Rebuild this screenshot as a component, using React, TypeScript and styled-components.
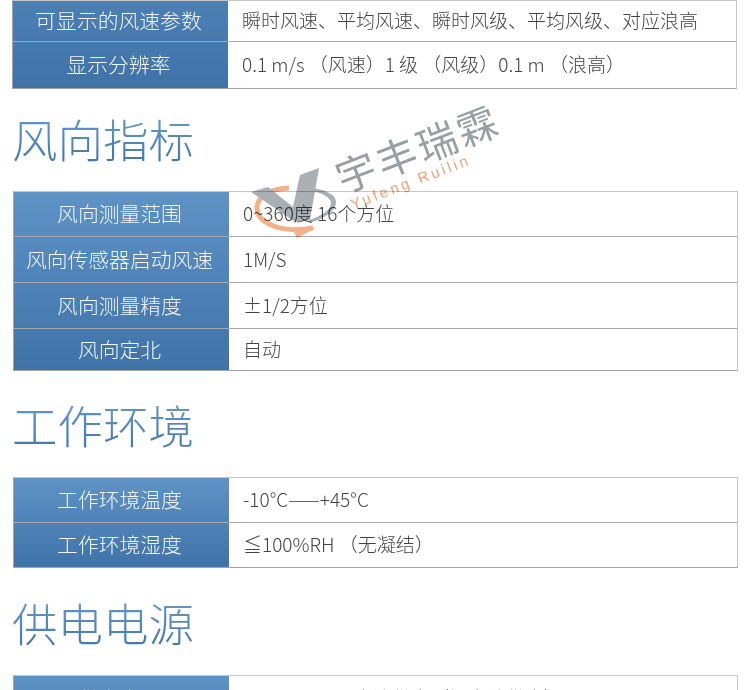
import React from 'react'
import styled, { createGlobalStyle } from 'styled-components'

type Row = { label: string; value: string; height: number }

const speedRows: Row[] = [
  { label: '可显示的风速参数', value: '瞬时风速、平均风速、瞬时风级、平均风级、对应浪高', height: 40 },
  { label: '显示分辨率', value: '0.1 m/s （风速）1 级 （风级）0.1 m （浪高）', height: 47 },
]

const directionRows: Row[] = [
  { label: '风向测量范围', value: '0~360度 16个方位', height: 44 },
  { label: '风向传感器启动风速', value: '1M/S', height: 46 },
  { label: '风向测量精度', value: '±1/2方位', height: 46 },
  { label: '风向定北', value: '自动', height: 42 },
]

const environmentRows: Row[] = [
  { label: '工作环境温度', value: '-10°C——+45°C', height: 44 },
  { label: '工作环境湿度', value: '≦100%RH （无凝结）', height: 45 },
]

const powerRows: Row[] = [{ label: '供电电压', value: 'DC 12V—24V 直流供电（锂电池供电）', height: 46 }]

const App = () => {
  return (
    <St.Page>
      <GlobalStyle />
      <SpecTable rows={speedRows} $from="#4c80b5" $span={89} $nudge />
      <St.Heading $top={21} $bottom={24}>风向指标</St.Heading>
      <St.TableWrap>
        <SpecTable rows={directionRows} $span={180} />
        <Watermark />
      </St.TableWrap>
      <St.Heading $top={25} $bottom={24}>工作环境</St.Heading>
      <SpecTable rows={environmentRows} $span={91} />
      <St.Heading $top={26} $bottom={24}>供电电源</St.Heading>
      <SpecTable rows={powerRows} $span={91} />
    </St.Page>
  )
}

export default App

const SpecTable = ({
  rows,
  $from = '#5f93c6',
  $span,
  $nudge,
}: {
  rows: Row[]
  $from?: string
  $span: number
  $nudge?: boolean
}) => (
  <St.Table $from={$from} $span={$span} $nudge={$nudge}>
    {rows.map((row) => (
      <St.Row key={row.label} $height={row.height}>
        <St.Label>{row.label}</St.Label>
        <St.Value>{row.value}</St.Value>
      </St.Row>
    ))}
  </St.Table>
)

const Watermark = () => (
  <St.Mark>
    <St.MarkLogo width="110" height="85" viewBox="0 0 110 85">
      <path d="M44 28C24 29 12 37 12 48c0 14 22 26 56 20" fill="none" stroke="#f4b088" strokeWidth="5" />
      <path d="M48 70 52 78 71 68z" fill="#f4b088" />
      <path d="M6 32 23 27 48 47 55 15 74 8 65 60 50 62z" fill="#a9afb3" />
      <path d="M67 28c15 2 24 7 24 14 0 9-11 16-26 21l-1-3c12-4 22-10 22-17 0-5-8-10-20-12z" fill="#a9afb3" />
    </St.MarkLogo>
    <St.MarkName>宇丰瑞霖</St.MarkName>
    <St.MarkLatin>Yufeng Ruilin</St.MarkLatin>
  </St.Mark>
)

const GlobalStyle = createGlobalStyle`
  html, body {
    margin: 0;
    padding: 0;
    background: #fff;
    overflow: hidden;
  }
`

const St = {
  Page: styled.div`
    width: 750px;
    height: 690px;
    overflow: hidden;
    padding: 0 12px 0 13px;
    box-sizing: border-box;
    background: #fff;
    font-family: 'Noto Sans CJK SC', 'Noto Sans', sans-serif;
  `,
  Heading: styled.h2<{ $top: number; $bottom: number }>`
    margin: ${(props) => props.$top}px 0 ${(props) => props.$bottom}px -1px;
    width: max-content;
    font-size: 45.5px;
    line-height: 57px;
    font-weight: 300;
    background: linear-gradient(180deg, #6a9dcf 0%, #3d74aa 100%);
    -webkit-background-clip: text;
    background-clip: text;
    color: transparent;
  `,
  TableWrap: styled.div`
    position: relative;
  `,
  Table: styled.div<{ $from: string; $span: number; $nudge?: boolean }>`
    margin: ${(props) => (props.$nudge ? '0 1px 0 -1px' : '0')};
    border: 1px solid #a3a3a3;
    border-top-color: #c6c6c6;
    border-right-color: #c6c6c6;
    box-sizing: border-box;
    background: linear-gradient(180deg, ${(props) => props.$from} 0, #3f72a7 ${(props) => props.$span}px) no-repeat left
      top / 215px 100%;
  `,
  Row: styled.div<{ $height: number }>`
    display: grid;
    grid-template-columns: 215px 1fr;
    height: ${(props) => props.$height}px;
    box-sizing: border-box;

    & + & {
      border-top: 1px solid #a8a8a8;
    }
  `,
  Label: styled.div`
    display: flex;
    align-items: center;
    justify-content: center;
    padding: 0 4px 2px 0;
    color: #f2f6fa;
    font-size: 20.8px;
    font-weight: 300;
    white-space: nowrap;
  `,
  Value: styled.div`
    display: flex;
    align-items: center;
    padding: 0 0 3px 14px;
    background: #fff;
    color: #444;
    font-size: 19px;
    font-weight: 300;
    white-space: nowrap;
  `,
  Mark: styled.div`
    position: absolute;
    left: 232px;
    top: -31px;
    width: 270px;
    height: 90px;
    pointer-events: none;
    mix-blend-mode: multiply;
  `,
  MarkLogo: styled.svg`
    display: block;
  `,
  MarkName: styled.span`
    position: absolute;
    left: 92px;
    top: -6px;
    font-size: 40px;
    line-height: 48px;
    letter-spacing: 3px;
    color: #9a9fa3;
    white-space: nowrap;
    transform: rotate(-21deg);
    transform-origin: left center;
  `,
  MarkLatin: styled.span`
    position: absolute;
    left: 106px;
    top: 36px;
    font-family: 'Liberation Sans', sans-serif;
    font-size: 15px;
    letter-spacing: 3px;
    color: #f0a273;
    white-space: nowrap;
    transform: rotate(-21deg);
    transform-origin: left center;
  `,
}
